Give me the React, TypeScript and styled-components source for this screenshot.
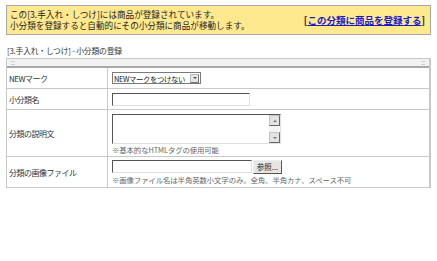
import React from 'react';
import styled, { createGlobalStyle } from 'styled-components';

const Global = createGlobalStyle`
  *, *::before, *::after { box-sizing: border-box; }
  body {
    margin: 0;
    background: #fff;
    font-family: "Noto Sans CJK JP", "Noto Sans", sans-serif;
    color: #333;
  }
`;

const Page = styled.div`
  padding: 5px 6px;
  width: 437px;
`;

const Notice = styled.div`
  display: flex;
  align-items: center;
  justify-content: space-between;
  background: #ffe98f;
  border: 1px solid #a8a8a8;
  padding: 2px 5px 2px 3px;
  height: 30px;
  font-size: 8.6px;
  line-height: 11px;
  color: #222;
`;

const NoticeLink = styled.span`
  font-weight: bold;
  font-size: 9.5px;
  color: #222;
  a {
    color: #1a1acc;
    text-decoration: underline;
  }
`;

const Title = styled.div`
  font-size: 7.8px;
  letter-spacing: -0.2px;
  margin: 11px 0 2px 1px;
  line-height: 10px;
  color: #333;
`;

const Table = styled.div`
  border: 1px solid #c8c8c8;
  border-right: 2px solid #c8c8c8;
`;

const HeadBar = styled.div`
  height: 9px;
  display: flex;
  justify-content: space-between;
  align-items: center;
  padding: 0 4px;
  font-size: 7px;
  color: #999;
  line-height: 7px;
  background-color: #f2f2f2;
  background-image: radial-gradient(#dcdcdc 0.6px, transparent 0.7px);
  background-size: 2px 2px;
  border-bottom: 2px solid #a8a8a8;
`;

const Row = styled.div<{ $h: number }>`
  display: grid;
  grid-template-columns: 101px 1fr;
  height: ${(p) => p.$h}px;
  border-bottom: 1px solid #c8c8c8;
  &:last-child {
    border-bottom: none;
  }
`;

const Label = styled.div`
  display: flex;
  align-items: center;
  padding-left: 2px;
  font-size: 8px;
  letter-spacing: -0.5px;
  border-right: 1px solid #c8c8c8;
  white-space: nowrap;
`;

const Cell = styled.div`
  display: flex;
  flex-direction: column;
  justify-content: center;
  padding-left: 4px;
  gap: 1px;
`;

const Select = styled.div`
  display: flex;
  align-items: center;
  width: 89px;
  height: 12px;
  border: 1px solid #7a7a7a;
  font-size: 7.4px;
  letter-spacing: -0.4px;
  white-space: nowrap;
  color: #222;
  padding: 0 1px;
  justify-content: space-between;
`;

const Arrow = styled.span`
  width: 9px;
  height: 9px;
  flex: none;
  background: #e4e4e4;
  border: 1px solid #bbb;
  border-right-color: #777;
  border-bottom-color: #777;
  display: flex;
  align-items: center;
  justify-content: center;
  &::after {
    content: '';
    border-left: 2px solid transparent;
    border-right: 2px solid transparent;
    border-top: 2px solid #555;
  }
`;

const TextInput = styled.div<{ $w: number }>`
  width: ${(p) => p.$w}px;
  height: 13px;
  border: 1px solid #e0e0e0;
  border-top: 1px solid #555;
  border-left: 1px solid #555;
  background: #fff;
`;

const Area = styled.div`
  display: flex;
  width: 169px;
  height: 30px;
  border: 1px solid #e0e0e0;
  border-top: 1px solid #555;
  border-left: 1px solid #555;
  margin-top: 3px;
`;

const AreaBody = styled.div`
  flex: 1;
`;

const Scroll = styled.div`
  width: 11px;
  display: flex;
  flex-direction: column;
  justify-content: space-between;
  background: #f4f4f4;
`;

const ScrollBtn = styled.div<{ $up?: boolean }>`
  height: 11px;
  background: #e2e2e2;
  border: 1px solid #c4c4c4;
  border-right-color: #666;
  border-bottom-color: #666;
  display: flex;
  align-items: center;
  justify-content: center;
  &::after {
    content: '';
    border-left: 2px solid transparent;
    border-right: 2px solid transparent;
    ${(p) => (p.$up ? 'border-bottom: 2px solid #777;' : 'border-top: 2px solid #777;')}
  }
`;

const Note = styled.div`
  font-size: 7.4px;
  letter-spacing: -0.1px;
  color: #666;
  line-height: 10px;
  white-space: nowrap;
`;

const FileRow = styled.div`
  display: flex;
  align-items: center;
  gap: 1px;
`;

const Browse = styled.div`
  height: 14px;
  width: 29px;
  background: #e6e6e6;
  border: 1px solid #eee;
  border-right-color: #555;
  border-bottom-color: #555;
  font-size: 7.5px;
  display: flex;
  align-items: center;
  justify-content: center;
  color: #222;
`;

export default function App() {
  return (
    <Page>
      <Global />
      <Notice>
        <div>
          この[3.手入れ・しつけ]には商品が登録されています。
          <br />
          小分類を登録すると自動的にその小分類に商品が移動します。
        </div>
        <NoticeLink>
          [<a>この分類に商品を登録する</a>]
        </NoticeLink>
      </Notice>
      <Title>[3.手入れ・しつけ] - 小分類の登録</Title>
      <Table>
        <HeadBar>
          <span>::</span>
          <span>::</span>
        </HeadBar>
        <Row $h={21}>
          <Label>NEWマーク</Label>
          <Cell>
            <Select>
              NEWマークをつけない
              <Arrow />
            </Select>
          </Cell>
        </Row>
        <Row $h={21}>
          <Label>小分類名</Label>
          <Cell>
            <TextInput $w={138} />
          </Cell>
        </Row>
        <Row $h={47}>
          <Label>分類の説明文</Label>
          <Cell>
            <Area>
              <AreaBody />
              <Scroll>
                <ScrollBtn $up />
                <ScrollBtn />
              </Scroll>
            </Area>
            <Note>※基本的なHTMLタグの使用可能</Note>
          </Cell>
        </Row>
        <Row $h={30}>
          <Label>分類の画像ファイル</Label>
          <Cell>
            <FileRow>
              <TextInput $w={140} />
              <Browse>参照...</Browse>
            </FileRow>
            <Note>※画像ファイル名は半角英数小文字のみ。全角、半角カナ、スペース不可</Note>
          </Cell>
        </Row>
      </Table>
    </Page>
  );
}
